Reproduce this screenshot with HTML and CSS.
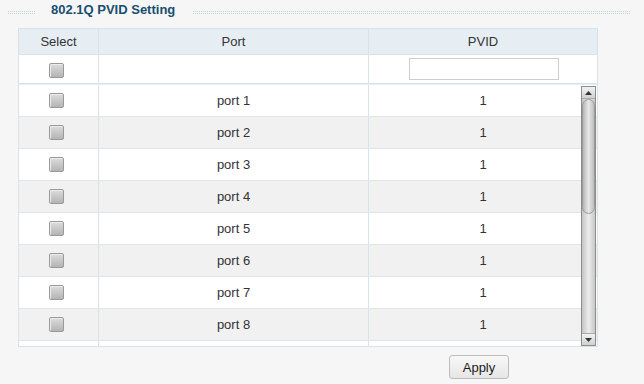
FILE: index.html
```html
<!DOCTYPE html>
<html>
<head>
    <title>802.1Q PVID Setting</title>
    <link rel="stylesheet" href="styles.css">
</head>
<body>
    <div class="title-bar">
        <span class="dots dots-left"></span>
        <h2 class="title">802.1Q PVID Setting</h2>
        <span class="dots dots-right"></span>
    </div>

    <div class="grid">
        <div class="row head">
            <div class="cell">Select</div>
            <div class="cell">Port</div>
            <div class="cell">PVID</div>
        </div>
        <div class="row filter">
            <div class="cell"><span class="check"></span></div>
            <div class="cell"></div>
            <div class="cell"><input class="pvid-input" type="text"></div>
        </div>

        <div class="body">
            <div class="row"><div class="cell"><span class="check"></span></div><div class="cell">port 1</div><div class="cell">1</div></div>
            <div class="row alt"><div class="cell"><span class="check"></span></div><div class="cell">port 2</div><div class="cell">1</div></div>
            <div class="row"><div class="cell"><span class="check"></span></div><div class="cell">port 3</div><div class="cell">1</div></div>
            <div class="row alt"><div class="cell"><span class="check"></span></div><div class="cell">port 4</div><div class="cell">1</div></div>
            <div class="row"><div class="cell"><span class="check"></span></div><div class="cell">port 5</div><div class="cell">1</div></div>
            <div class="row alt"><div class="cell"><span class="check"></span></div><div class="cell">port 6</div><div class="cell">1</div></div>
            <div class="row"><div class="cell"><span class="check"></span></div><div class="cell">port 7</div><div class="cell">1</div></div>
            <div class="row alt"><div class="cell"><span class="check"></span></div><div class="cell">port 8</div><div class="cell">1</div></div>
            <div class="row"><div class="cell"></div><div class="cell"></div><div class="cell"></div></div>

            <!-- fake scrollbar drawn over the rows -->
            <div class="scrollbar">
                <div class="sb-btn">
                    <svg width="7" height="4" viewBox="0 0 7 4"><path d="M0 4 L3.5 0 L7 4 Z" fill="#333"/></svg>
                </div>
                <div class="sb-track">
                    <div class="sb-thumb"></div>
                </div>
                <div class="sb-btn">
                    <svg width="7" height="4" viewBox="0 0 7 4"><path d="M0 0 L7 0 L3.5 4 Z" fill="#333"/></svg>
                </div>
            </div>
        </div>
    </div>

    <div class="actions">
        <button class="btn">Apply</button>
    </div>
</body>
</html>
```

FILE: styles.css
```css
body {
    margin: 0;
    background: #f6f6f6;
    font-family: "Liberation Sans", Arial, sans-serif;
    font-size: 13px;
    color: #333;
}
.title-bar {
    display: flex;
    align-items: flex-start;
    height: 20px;
    padding-left: 7px;
}
.dots {
    height: 5px;
    margin-top: 10px;
    background-color: #c2d0da;
    background-image:
        linear-gradient(90deg, #f6f6f6 50%, transparent 50%),
        linear-gradient(#f6f6f6 50%, transparent 50%);
    background-size: 2px 2px;
}
.dots-left {
    width: 29px;
}
.dots-right {
    width: 439px;
}
.title {
    margin: 0 17px 0 15px;
    font-size: 13px;
    line-height: 20px;
    font-weight: bold;
    color: #184f6f;
}
.grid {
    width: 578px;
    margin: 8px 0 0 18px;
    border: 1px solid #d6e3ec;
    background: #fff;
}
.row {
    display: grid;
    grid-template-columns: 80px 270px 1fr;
    height: 31px;
    border-bottom: 1px solid #dbe6ee;
}
.row.alt {
    background: #f1f1f1;
}
.cell {
    display: flex;
    align-items: center;
    justify-content: center;
    border-right: 1px solid #d6e3ec;
}
.cell:last-child {
    border-right: none;
}
.head {
    height: 25px;
    background: #e6eef3;
    border-bottom-color: #d6e3ec;
}
.filter {
    height: 28px;
    border-bottom: 1px solid #d6e3ec;
}
.check {
    width: 13px;
    height: 13px;
    margin-right: 4px;
    border: 1px solid #999;
    border-radius: 2px;
    background: linear-gradient(#dcdcdc, #b4b4b4);
    box-shadow: inset 1px 1px 0 #ececec;
}
.filter .check {
    margin-top: 3px;
}
.pvid-input {
    box-sizing: border-box;
    width: 150px;
    height: 22px;
    margin: 0 0 0 1px;
    border: 1px solid #cdcdcd;
    background: #fff;
}
.body {
    position: relative;
    height: 261px;
    overflow: hidden;
    border-top: 1px solid #e6eef3;
}
.scrollbar {
    position: absolute;
    top: 1px;
    right: 1px;
    bottom: 0;
    width: 13px;
    display: flex;
    flex-direction: column;
    border: 1px solid #8c8c8c;
    background: #fff;
}
.sb-btn {
    height: 11px;
    display: flex;
    align-items: center;
    justify-content: center;
    background: linear-gradient(#f2f2f2, #d0d0d0);
}
.sb-track {
    flex: 1;
    background: linear-gradient(90deg, #c4c4c4, #ececec 50%, #c8c8c8);
    border-top: 1px solid #aaa;
    border-bottom: 1px solid #aaa;
}
.sb-thumb {
    box-sizing: border-box;
    height: 115px;
    border: 1px solid #9a9a9a;
    border-radius: 7px;
    background: linear-gradient(90deg, #b6b6b6, #e8e8e8 50%, #bdbdbd);
}
.actions {
    padding: 8px 0 0 449px;
}
.btn {
    width: 60px;
    height: 24px;
    padding: 0;
    border: 1px solid #bdbdbd;
    border-radius: 3px;
    background: linear-gradient(#f8f8f8, #e6e6e6);
    font-family: "Liberation Sans", Arial, sans-serif;
    font-size: 13px;
    color: #1a1a1a;
}
```
